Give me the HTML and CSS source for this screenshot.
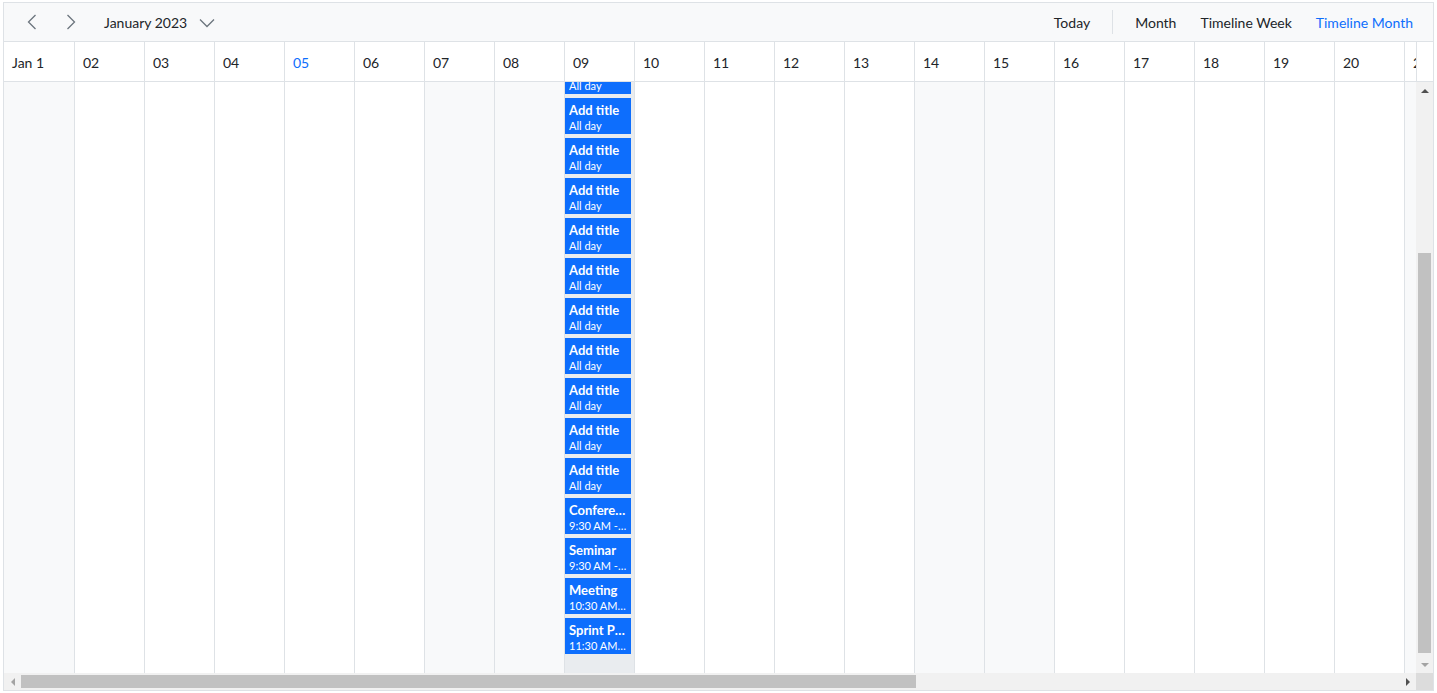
FILE: index.html
```html
<!DOCTYPE html>
<html>
<head>
<meta charset="utf-8">
<link rel="stylesheet" href="styles.css">
</head>
<body>
<div class="scheduler">
  <div class="toolbar">
    <div class="tb-left">
      <button class="icon-btn" aria-label="Previous">
        <svg width="10" height="16" viewBox="0 0 10 16"><path d="M8.5 1 L1.5 8 L8.5 15" fill="none" stroke="#6c757d" stroke-width="1.3"/></svg>
      </button>
      <button class="icon-btn" aria-label="Next">
        <svg width="10" height="16" viewBox="0 0 10 16"><path d="M1.5 1 L8.5 8 L1.5 15" fill="none" stroke="#6c757d" stroke-width="1.3"/></svg>
      </button>
      <span class="date-label">January 2023</span>
      <span class="date-caret">
        <svg width="16" height="10" viewBox="0 0 16 10"><path d="M1 1.5 L8 8.5 L15 1.5" fill="none" stroke="#6c757d" stroke-width="1.3"/></svg>
      </span>
    </div>
    <div class="tb-right">
      <button class="tb-btn">Today</button>
      <span class="tb-sep"></span>
      <button class="tb-btn">Month</button>
      <button class="tb-btn">Timeline Week</button>
      <button class="tb-btn active">Timeline Month</button>
    </div>
  </div>

  <div class="header-row">
    <div class="header-cells">
      <div class="hcell first">Jan 1</div>
      <div class="hcell">02</div>
      <div class="hcell">03</div>
      <div class="hcell">04</div>
      <div class="hcell today">05</div>
      <div class="hcell">06</div>
      <div class="hcell">07</div>
      <div class="hcell">08</div>
      <div class="hcell">09</div>
      <div class="hcell">10</div>
      <div class="hcell">11</div>
      <div class="hcell">12</div>
      <div class="hcell">13</div>
      <div class="hcell">14</div>
      <div class="hcell">15</div>
      <div class="hcell">16</div>
      <div class="hcell">17</div>
      <div class="hcell">18</div>
      <div class="hcell">19</div>
      <div class="hcell">20</div>
      <div class="hcell">21</div>
    </div>
    <div class="header-gutter"></div>
  </div>

  <div class="body-row">
    <div class="body-cells">
      <div class="bcell first weekend"></div>
      <div class="bcell"></div>
      <div class="bcell"></div>
      <div class="bcell"></div>
      <div class="bcell"></div>
      <div class="bcell"></div>
      <div class="bcell weekend"></div>
      <div class="bcell weekend"></div>
      <div class="bcell selected">
        <div class="event-stack">
          <div class="event"><div class="ev-title">Add title</div><div class="ev-sub">All day</div></div>
          <div class="event"><div class="ev-title">Add title</div><div class="ev-sub">All day</div></div>
          <div class="event"><div class="ev-title">Add title</div><div class="ev-sub">All day</div></div>
          <div class="event"><div class="ev-title">Add title</div><div class="ev-sub">All day</div></div>
          <div class="event"><div class="ev-title">Add title</div><div class="ev-sub">All day</div></div>
          <div class="event"><div class="ev-title">Add title</div><div class="ev-sub">All day</div></div>
          <div class="event"><div class="ev-title">Add title</div><div class="ev-sub">All day</div></div>
          <div class="event"><div class="ev-title">Add title</div><div class="ev-sub">All day</div></div>
          <div class="event"><div class="ev-title">Add title</div><div class="ev-sub">All day</div></div>
          <div class="event"><div class="ev-title">Add title</div><div class="ev-sub">All day</div></div>
          <div class="event"><div class="ev-title">Add title</div><div class="ev-sub">All day</div></div>
          <div class="event"><div class="ev-title">Conference</div><div class="ev-sub">9:30 AM - 11:00 AM</div></div>
          <div class="event"><div class="ev-title">Seminar</div><div class="ev-sub">9:30 AM - 10:30 AM</div></div>
          <div class="event"><div class="ev-title">Meeting</div><div class="ev-sub">10:30 AM - 11:30 AM</div></div>
          <div class="event"><div class="ev-title">Sprint Planning</div><div class="ev-sub">11:30 AM - 12:30 PM</div></div>
        </div>
      </div>
      <div class="bcell"></div>
      <div class="bcell"></div>
      <div class="bcell"></div>
      <div class="bcell"></div>
      <div class="bcell weekend"></div>
      <div class="bcell weekend"></div>
      <div class="bcell"></div>
      <div class="bcell"></div>
      <div class="bcell"></div>
      <div class="bcell"></div>
      <div class="bcell"></div>
      <div class="bcell weekend"></div>
    </div>
    <div class="vscroll">
      <div class="sb-arrow"><span class="tri tri-up"></span></div>
      <div class="vtrack"><div class="vthumb"></div></div>
      <div class="sb-arrow"><span class="tri tri-down dim"></span></div>
    </div>
  </div>

  <div class="hscroll">
    <div class="htrack-wrap">
      <div class="sb-arrow"><span class="tri tri-left dim"></span></div>
      <div class="htrack"><div class="hthumb"></div></div>
      <div class="sb-arrow"><span class="tri tri-right"></span></div>
    </div>
    <div class="sb-corner"></div>
  </div>
</div>
</body>
</html>
```

FILE: styles.css
```css
* { box-sizing: border-box; }

html, body {
  margin: 0;
  padding: 0;
  background: #ffffff;
}

body {
  padding: 2px 0 0 3px;
  font-family: "Segoe UI", Lato, "Noto Sans", sans-serif;
  color: #212529;
}

.scheduler {
  width: 1431px;
  height: 689px;
  border: 1px solid #dee2e6;
  display: flex;
  flex-direction: column;
  overflow: hidden;
}

/* Toolbar */
.toolbar {
  flex: 0 0 39px;
  height: 39px;
  background: #f8f9fa;
  border-bottom: 1px solid #dee2e6;
  display: flex;
  align-items: center;
  justify-content: space-between;
  padding: 0 8px 0 13px;
}

.tb-left, .tb-right {
  display: flex;
  align-items: center;
  height: 100%;
}

.icon-btn {
  width: 30px;
  height: 30px;
  margin-right: 9px;
  border: 0;
  padding: 0;
  background: transparent;
  display: flex;
  align-items: center;
  justify-content: center;
}

.date-label {
  margin-left: 9px;
  font-size: 14px;
  color: #212529;
}

.date-caret {
  display: flex;
  align-items: center;
  margin-left: 12px;
  padding-top: 1px;
}

.tb-btn {
  border: 0;
  background: transparent;
  font-family: inherit;
  font-size: 14px;
  color: #212529;
  padding: 0 12px;
  height: 30px;
}

.tb-btn.active {
  color: #0d6efd;
}

.tb-sep {
  width: 1px;
  height: 24px;
  background: #dee2e6;
  margin: 0 10px;
}

/* Header */
.header-row {
  flex: 0 0 40px;
  height: 40px;
  display: flex;
  border-bottom: 1px solid #dee2e6;
}

.header-cells {
  flex: 1 1 auto;
  display: flex;
  overflow: hidden;
}

.hcell {
  flex: 0 0 70px;
  width: 70px;
  border-right: 1px solid #dee2e6;
  font-size: 14px;
  padding: 2px 0 0 8px;
  display: flex;
  align-items: center;
}

.hcell.first,
.bcell.first {
  flex-basis: 71px;
  width: 71px;
}

.hcell.today {
  color: #0d6efd;
}

.header-gutter {
  flex: 0 0 17px;
  border-left: 1px solid #dee2e6;
  background: #ffffff;
}

/* Body */
.body-row {
  flex: 1 1 auto;
  display: flex;
  min-height: 0;
}

.body-cells {
  flex: 1 1 auto;
  display: flex;
  overflow: hidden;
}

.bcell {
  flex: 0 0 70px;
  width: 70px;
  border-right: 1px solid #dee2e6;
  background: #ffffff;
}

.bcell.weekend {
  background: #f8f9fa;
}

.bcell.selected {
  background: #e9ecef;
}

.event-stack {
  display: flex;
  flex-direction: column;
  gap: 4px;
  margin-top: -24px;
  padding: 0 3px 0 0;
}

.event {
  height: 36px;
  background: #0d6efd;
  color: #ffffff;
  padding: 4px 4px 0 4px;
  overflow: hidden;
}

.ev-title {
  font-size: 13px;
  font-weight: 700;
  line-height: 17px;
  white-space: nowrap;
  overflow: hidden;
  text-overflow: ellipsis;
}

.ev-sub {
  font-size: 11px;
  line-height: 14px;
  white-space: nowrap;
  overflow: hidden;
  text-overflow: ellipsis;
}

/* Scrollbars */
.vscroll {
  flex: 0 0 17px;
  width: 17px;
  background: #f1f1f1;
  display: flex;
  flex-direction: column;
}

.sb-arrow {
  flex: 0 0 17px;
  width: 17px;
  height: 17px;
  display: flex;
  align-items: center;
  justify-content: center;
}

.vtrack {
  flex: 1 1 auto;
  padding: 154px 2px 0 2px;
}

.vthumb {
  height: 400px;
  background: #c1c1c1;
}

.hscroll {
  flex: 0 0 17px;
  height: 17px;
  display: flex;
}

.htrack-wrap {
  flex: 1 1 auto;
  display: flex;
  background: #f1f1f1;
}

.htrack {
  flex: 1 1 auto;
  padding: 2px 0;
}

.hthumb {
  width: 895px;
  height: 13px;
  background: #c1c1c1;
}

.sb-corner {
  flex: 0 0 17px;
  background: #dcdcdc;
}

.tri {
  width: 0;
  height: 0;
  border-style: solid;
}

.tri-up {
  border-width: 0 4px 4px 4px;
  border-color: transparent transparent #505050 transparent;
}

.tri-down {
  border-width: 4px 4px 0 4px;
  border-color: #505050 transparent transparent transparent;
}

.tri-left {
  border-width: 4px 4px 4px 0;
  border-color: transparent #505050 transparent transparent;
}

.tri-right {
  border-width: 4px 0 4px 4px;
  border-color: transparent transparent transparent #505050;
}

.tri-down.dim {
  border-top-color: #a3a3a3;
}

.tri-left.dim {
  border-right-color: #a3a3a3;
}
```
